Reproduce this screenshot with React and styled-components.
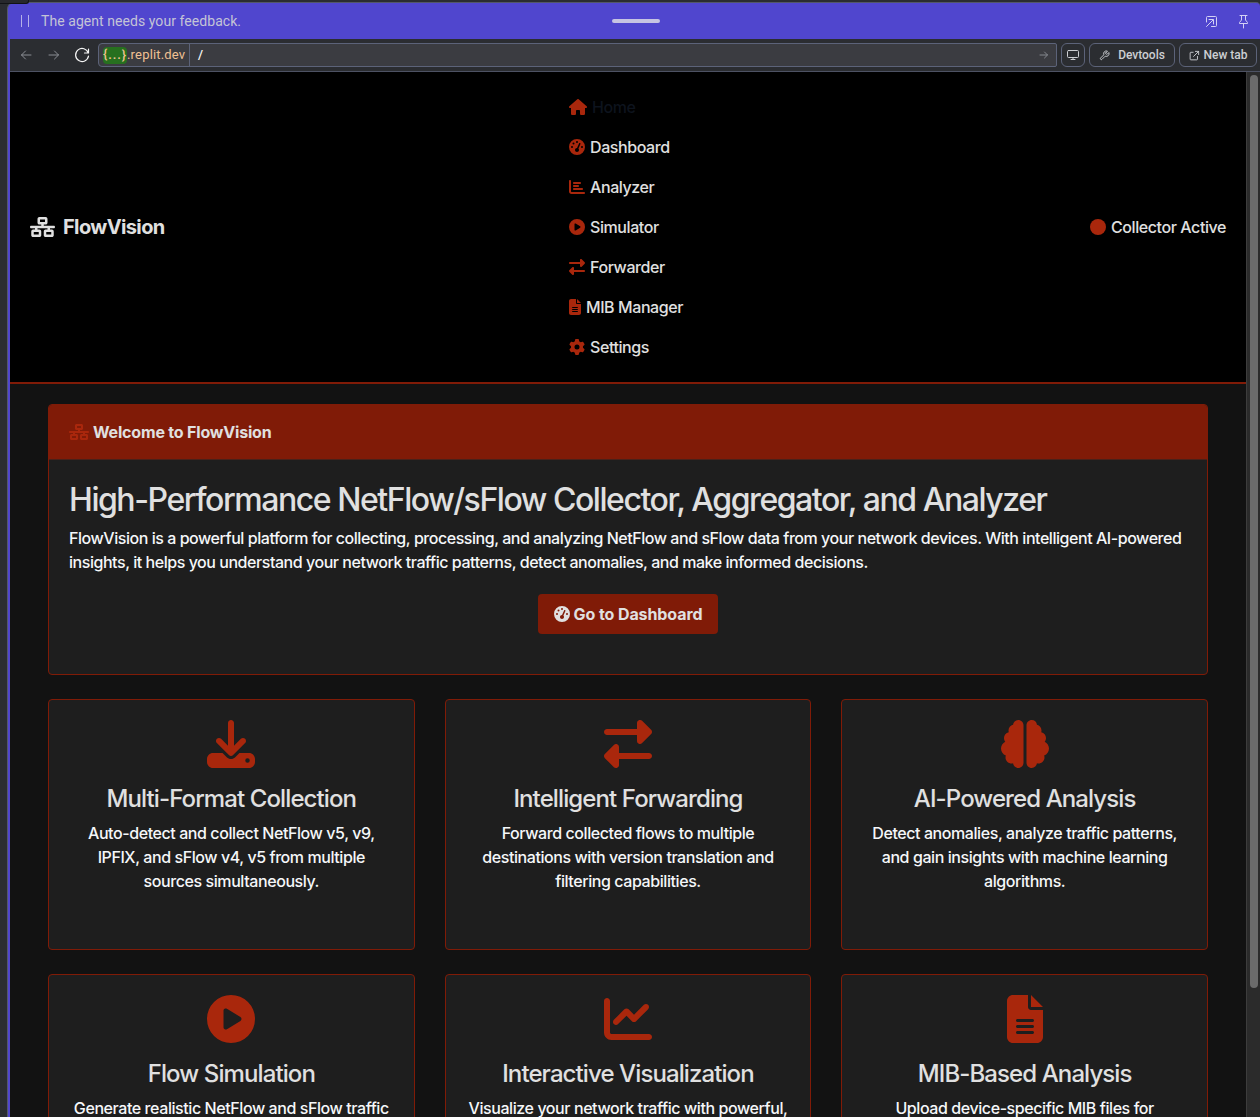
import React from 'react';
import styled, { createGlobalStyle, css } from 'styled-components';
import {
  FaHouse, FaGaugeHigh, FaChartBar, FaCirclePlay, FaRightLeft, FaFileLines,
  FaGear, FaNetworkWired, FaCircle, FaDownload, FaBrain, FaChartLine,
} from 'react-icons/fa6';

const color = {
  chrome: '#2b2d31',
  field: '#3b3c41',
  outline: '#5c6379',
  purple: '#5046ce',
  deepRed: '#801b07',
  red: '#a9270c',
  page: '#121212',
  card: '#1e1e1e',
  light: '#e0e0e0',
  text: '#f5f7f9',
};

const GlobalStyle = createGlobalStyle`
  * { box-sizing: border-box; }
  body { margin: 0; background: ${color.chrome}; overflow: hidden; }
  svg { display: block; flex: none; }
`;

const Workspace = styled.div`
  position: relative;
  height: 1117px;
  padding: 2px 0 0 7px;
  overflow: hidden;
  background: ${color.chrome};
  font-family: Inter, "Liberation Sans", sans-serif;
`;

const CornerTab = styled.div`
  position: absolute;
  top: 0;
  left: 0;
  width: 29px;
  height: 4px;
  background: #27282c;
  border: solid #121316;
  border-width: 0 1px 1px 0;
  border-bottom-right-radius: 3px;
`;

const Pane = styled.section`
  display: flex;
  flex-direction: column;
  height: 1115px;
  padding-left: 2px;
  background: ${color.purple};
  border: solid #53586a;
  border-width: 1px 0 0 1px;
  border-top-left-radius: 7px;
  border-top-right-radius: 4px;
`;

const AgentBar = styled.header`
  display: grid;
  grid-template-columns: 1fr auto 1fr;
  align-items: center;
  flex: none;
  height: 36px;
  padding: 0 11px 0 12px;
  color: #c4c4d6;
`;

const AgentStatus = styled.div`
  display: flex;
  align-items: center;
  gap: 12px;
  margin-left: -1px;
  font: 400 14px/20px Roboto, sans-serif;
  letter-spacing: 0.06px;
`;

const PauseMark = styled.span`
  width: 8px;
  height: 12px;
  border: solid #b5b1e8;
  border-width: 0 1px;
`;

const DragHandle = styled.div`
  width: 48px;
  height: 4px;
  border-radius: 2px;
  background: #c6c4e2;
`;

const AgentActions = styled.div`
  display: flex;
  align-items: center;
  justify-content: flex-end;
  gap: 20px;
`;

const Toolbar = styled.div`
  display: flex;
  align-items: center;
  gap: 4px;
  flex: none;
  height: 33px;
  padding: 0 3px 0 10px;
  background: ${color.chrome};
  border-bottom: 1px solid #4d5263;
  font: 400 12px/24px Roboto, sans-serif;
`;

const NavControls = styled.div`
  display: flex;
  align-items: center;
  gap: 16px;
  width: 74px;
  color: #8b8e94;
  svg:last-child { margin-left: -2px; }
`;

const AddressBar = styled.div`
  display: flex;
  align-items: center;
  flex: 1;
  height: 24px;
  padding-right: 6px;
  background: ${color.field};
  border: 1px solid ${color.outline};
  border-radius: 4px 2px 2px 4px;
  color: #f0c193;
  font-size: 13px;
`;

const Host = styled.div`
  display: flex;
  align-items: center;
  width: 91px;
  height: 22px;
  padding-left: 4px;
  border-right: 1px solid ${color.outline};
  letter-spacing: 0.18px;
`;

const HostToken = styled.span`
  width: 24px;
  height: 17px;
  border-radius: 4px;
  background: #27701f;
  text-align: center;
  font-weight: 500;
  line-height: 16px;
  letter-spacing: 0.9px;
`;

const Path = styled.span`
  flex: 1;
  padding-left: 8px;
  color: #f5f5f5;
  font-weight: 500;
`;

const ToolButton = styled.button`
  display: flex;
  align-items: center;
  justify-content: center;
  gap: ${p => p.$gap || 0}px;
  width: ${p => p.$width}px;
  height: 24px;
  padding: 0;
  border: 1px solid ${color.outline};
  border-radius: 6px;
  background: transparent;
  color: #cdcfd3;
  font: 500 12px/22px Roboto, sans-serif;
  letter-spacing: -0.02px;
`;

const Viewport = styled.div`
  display: flex;
  flex: 1;
  min-height: 0;
  overflow: hidden;
`;

const Site = styled.div`
  flex: 1;
  min-width: 0;
  overflow: hidden;
  background: ${color.page};
`;

const ScrollTrack = styled.div`
  width: 14px;
  padding: 3px 0 0 3px;
  background: #2b2b2b;
  border-left: 1px solid #3d3d3d;
`;

const ScrollThumb = styled.div`
  width: 8px;
  height: 913px;
  border-radius: 4px;
  background: #6b6b6b;
`;

const NavBar = styled.nav`
  display: flex;
  align-items: center;
  justify-content: space-between;
  height: 312px;
  padding: 0 20px;
  background: #000;
  border-bottom: 2px solid ${color.deepRed};
  color: ${color.light};
`;

const Brand = styled.div`
  display: flex;
  align-items: center;
  gap: 8px;
  width: 539px;
  font-size: 20px;
  font-weight: 700;
  letter-spacing: -0.62px;
`;

const Menu = styled.ul`
  display: flex;
  flex-direction: column;
  flex: 1;
  margin: 0;
  padding: 0;
  list-style: none;
`;

const iconLabel = css`
  display: flex;
  align-items: center;
  font-size: 16px;
  font-weight: 500;
  line-height: 24px;
  letter-spacing: -0.42px;
  svg { color: ${color.red}; }
`;

const MenuItem = styled.li`
  ${iconLabel}
  gap: 5px;
  height: 40px;
  color: ${p => (p.$active ? '#0d131d' : color.light)};
`;

const CollectorStatus = styled.div`
  ${iconLabel}
  gap: 5px;
`;

const Main = styled.main`
  padding: 20px 38px 0;
`;

const WelcomeCard = styled.section`
  height: 271px;
  margin-bottom: 24px;
  border: 1px solid ${color.deepRed};
  border-radius: 4px;
  background: ${color.card};
  overflow: hidden;
`;

const WelcomeHeader = styled.header`
  display: flex;
  align-items: center;
  gap: 4px;
  height: 55px;
  padding-left: 20px;
  background: ${color.deepRed};
  border-bottom: 1px solid #4a2119;
  color: ${color.light};
  font-size: 16px;
  font-weight: 700;
  letter-spacing: -0.185px;
  svg { color: ${color.red}; }
`;

const WelcomeBody = styled.div`
  display: flex;
  flex-direction: column;
  align-items: center;
  padding: 21px 20px 20px;
`;

const Headline = styled.h2`
  align-self: stretch;
  margin: 0 0 7px;
  color: ${color.light};
  font-size: 32px;
  font-weight: 500;
  line-height: 38px;
  letter-spacing: -1.45px;
  white-space: nowrap;
`;

const Copy = styled.p`
  align-self: stretch;
  margin: 0;
  color: ${color.text};
  font-size: 16px;
  font-weight: 500;
  line-height: 24px;
  letter-spacing: ${p => (p.$wide ? -0.455 : -0.42)}px;
`;

const PrimaryButton = styled.button`
  display: flex;
  align-items: center;
  justify-content: center;
  gap: 4px;
  width: 180px;
  height: 40px;
  margin-top: 20px;
  padding: 0;
  border: 0;
  border-radius: 4px;
  background: ${color.deepRed};
  color: ${color.light};
  font: 700 16px/24px Inter, sans-serif;
  letter-spacing: -0.09px;
`;

const FeatureGrid = styled.div`
  display: grid;
  grid-template-columns: repeat(3, 1fr);
  grid-auto-rows: 251px;
  gap: 24px 30px;
`;

const FeatureCard = styled.article`
  display: flex;
  flex-direction: column;
  align-items: center;
  padding: 20px;
  border: 1px solid ${color.deepRed};
  border-radius: 4px;
  background: ${color.card};
  text-align: center;
  svg { color: ${color.red}; }
`;

const FeatureTitle = styled.h3`
  margin: 16px 0 8px;
  color: ${color.light};
  font-size: 24px;
  font-weight: 500;
  line-height: 29px;
  letter-spacing: -0.9px;
  white-space: nowrap;
`;

/* Thin stroked glyphs for the browser chrome. */
const Glyph = ({ w = 12, h = 12, box = `0 0 ${w} ${h}`, children, ...rest }) => (
  <svg width={w} height={h} viewBox={box} fill="none" stroke="currentColor"
    strokeWidth="1" strokeLinecap="round" strokeLinejoin="round" {...rest}>
    {children}
  </svg>
);

const menu = [
  { label: 'Home', Icon: FaHouse, width: 18, active: true },
  { label: 'Dashboard', Icon: FaGaugeHigh, width: 16 },
  { label: 'Analyzer', Icon: FaChartBar, width: 16 },
  { label: 'Simulator', Icon: FaCirclePlay, width: 16 },
  { label: 'Forwarder', Icon: FaRightLeft, width: 16 },
  { label: 'MIB Manager', Icon: FaFileLines, width: 12 },
  { label: 'Settings', Icon: FaGear, width: 16 },
];

const features = [
  { title: 'Multi-Format Collection', Icon: FaDownload, width: 48,
    text: 'Auto-detect and collect NetFlow v5, v9, IPFIX, and sFlow v4, v5 from multiple sources simultaneously.' },
  { title: 'Intelligent Forwarding', Icon: FaRightLeft, width: 48,
    text: 'Forward collected flows to multiple destinations with version translation and filtering capabilities.' },
  { title: 'AI-Powered Analysis', Icon: FaBrain, width: 48,
    text: 'Detect anomalies, analyze traffic patterns, and gain insights with machine learning algorithms.' },
  { title: 'Flow Simulation', Icon: FaCirclePlay, width: 48,
    text: 'Generate realistic NetFlow and sFlow traffic' },
  { title: 'Interactive Visualization', Icon: FaChartLine, width: 48,
    text: 'Visualize your network traffic with powerful,' },
  { title: 'MIB-Based Analysis', Icon: FaFileLines, width: 36,
    text: 'Upload device-specific MIB files for' },
];

export default function App() {
  return (
    <Workspace>
      <GlobalStyle />
      <Pane>
        <AgentBar>
          <AgentStatus><PauseMark />The agent needs your feedback.</AgentStatus>
          <DragHandle />
          <AgentActions>
            <Glyph w={13} h={13} color="#d3d0f4">
              <path d="M1.500 7V2.500a1 1 0 0 1 1-1h8a1 1 0 0 1 1 1v8a1 1 0 0 1-1 1H6.500M1.500 11.500l6.500-6.500M4 4.500h4.500V9" />
            </Glyph>
            <Glyph w={11} h={15} color="#d3d0f4">
              <path d="M2 1.500h7M3.500 1.500v4.500L1.500 8.500v1h8v-1L7.500 6V1.500M5.500 9.500V14" />
            </Glyph>
          </AgentActions>
        </AgentBar>
        <Toolbar>
          <NavControls>
            <Glyph><path d="M11 6H1.500M5.500 2l-4 4 4 4" /></Glyph>
            <Glyph><path d="M1 6h9.500M6.500 2l4 4-4 4" /></Glyph>
            <Glyph w={16} h={16} color="#f5f5f5" strokeWidth="1.200">
              <path d="M14.500 2v4h-4M14.300 6A6.500 6.500 0 1 0 14.500 9.200" />
            </Glyph>
          </NavControls>
          <AddressBar>
            <Host><HostToken>{'{...}'}</HostToken>.replit.dev</Host>
            <Path>/</Path>
            <Glyph w={12} h={12} color="#85888f"><path d="M2 6h7.500M6.500 3l3 3-3 3" /></Glyph>
          </AddressBar>
          <ToolButton $width={24} aria-label="Screen size">
            <Glyph w={12} h={12}><path d="M1.500 1.500h9a1 1 0 0 1 1 1v5a1 1 0 0 1-1 1h-9a1 1 0 0 1-1-1v-5a1 1 0 0 1 1-1zM4 10.500h4M6 8.500v2" /></Glyph>
          </ToolButton>
          <ToolButton $width={86} $gap={8}>
            <Glyph w={11} h={11} box="0 0 24 24" strokeWidth="2">
              <path d="M14.700 6.300a1 1 0 0 0 0 1.400l1.600 1.600a1 1 0 0 0 1.400 0l3.770-3.770a6 6 0 0 1-7.940 7.940l-6.910 6.910a2.120 2.120 0 0 1-3-3l6.910-6.910a6 6 0 0 1 7.940-7.940l-3.760 3.760z" />
            </Glyph>
            Devtools
          </ToolButton>
          <ToolButton $width={78} $gap={4}>
            <Glyph w={11} h={11} box="0 0 24 24" strokeWidth="2">
              <path d="M9 5H4a1.500 1.500 0 0 0-1.500 1.500V20A1.500 1.500 0 0 0 4 21.500h13a1.500 1.500 0 0 0 1.500-1.500v-6M14 3h7v7M21 3L10 14" />
            </Glyph>
            New tab
          </ToolButton>
        </Toolbar>
        <Viewport>
          <Site>
            <NavBar>
              <Brand><FaNetworkWired size={20} style={{ width: 25 }} />FlowVision</Brand>
              <Menu>
                {menu.map(({ label, Icon, width, active }) => (
                  <MenuItem key={label} $active={active}>
                    <Icon size={16} style={{ width }} />{label}
                  </MenuItem>
                ))}
              </Menu>
              <CollectorStatus><FaCircle size={16} />Collector Active</CollectorStatus>
            </NavBar>
            <Main>
              <WelcomeCard>
                <WelcomeHeader><FaNetworkWired size={16} style={{ width: 20 }} />Welcome to FlowVision</WelcomeHeader>
                <WelcomeBody>
                  <Headline>High-Performance NetFlow/sFlow Collector, Aggregator, and Analyzer</Headline>
                  <Copy $wide>
                    FlowVision is a powerful platform for collecting, processing, and analyzing NetFlow and sFlow data from your network devices. With intelligent AI-powered insights, it helps you understand your network traffic patterns, detect anomalies, and make informed decisions.
                  </Copy>
                  <PrimaryButton><FaGaugeHigh size={16} />Go to Dashboard</PrimaryButton>
                </WelcomeBody>
              </WelcomeCard>
              <FeatureGrid>
                {features.map(({ title, Icon, width, text }) => (
                  <FeatureCard key={title}>
                    <Icon size={48} style={{ width }} />
                    <FeatureTitle>{title}</FeatureTitle>
                    <Copy>{text}</Copy>
                  </FeatureCard>
                ))}
              </FeatureGrid>
            </Main>
          </Site>
          <ScrollTrack><ScrollThumb /></ScrollTrack>
        </Viewport>
      </Pane>
      <CornerTab />
    </Workspace>
  );
}
